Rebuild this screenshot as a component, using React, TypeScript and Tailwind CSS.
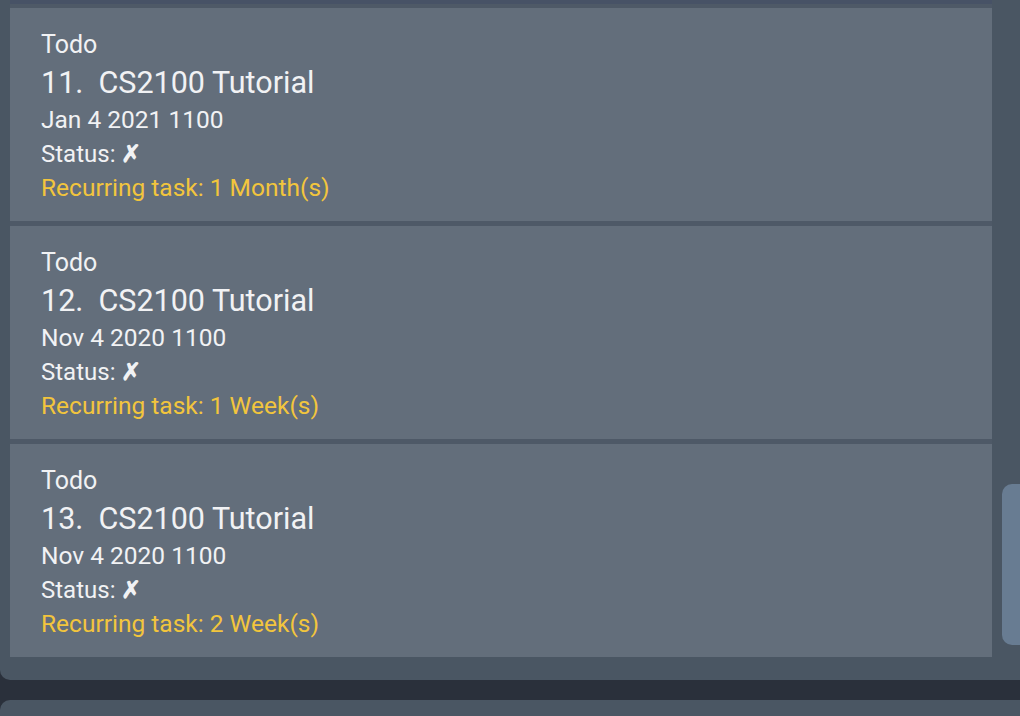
const tasks = [
  { no: 11, date: "Jan 4 2021 1100", recur: "1 Month(s)" },
  { no: 12, date: "Nov 4 2020 1100", recur: "1 Week(s)" },
  { no: 13, date: "Nov 4 2020 1100", recur: "2 Week(s)" },
];

function TaskCard({ no, date, recur }: { no: number; date: string; recur: string }) {
  return (
    <div className="h-[213px] bg-[#636e7b] pl-[31px] pt-[20px] text-[#f1f2f4]">
      <div className="text-[25px] leading-[34px]">Todo</div>
      <div className="text-[30.5px] leading-[40px] mt-[1px]">
        {no}.&nbsp;&nbsp;CS2100 Tutorial
      </div>
      <div className="text-[24.5px] leading-[34px]">{date}</div>
      <div className="text-[24px] leading-[34px]">
        Status: <span className="font-bold">✗</span>
      </div>
      <div className="text-[24.5px] leading-[34px] text-[#f2c53d]">Recurring task: {recur}</div>
    </div>
  );
}

export default function App() {
  return (
    <div className="w-[1020px] h-[716px] overflow-hidden bg-[#2a303b] font-['Roboto',sans-serif]">
      <div className="h-[680px] bg-[#4a5663] rounded-bl-[10px] flex">
        <div className="ml-[10px] w-[982px] flex flex-col">
          <div className="h-[4px] bg-[#475266]" />
          <div className="flex flex-col gap-[5px] pt-[4px] bg-[#4e5967]">
            {tasks.map((t) => (
              <TaskCard key={t.no} {...t} />
            ))}
          </div>
        </div>
        <div className="flex-1 pt-[484px] pl-[10px]">
          <div className="h-[161px] bg-[#687c92] rounded-l-[10px]" />
        </div>
      </div>
      <div className="mt-[20px] h-[16px] bg-[#4a5663] rounded-tl-[10px]" />
    </div>
  );
}
